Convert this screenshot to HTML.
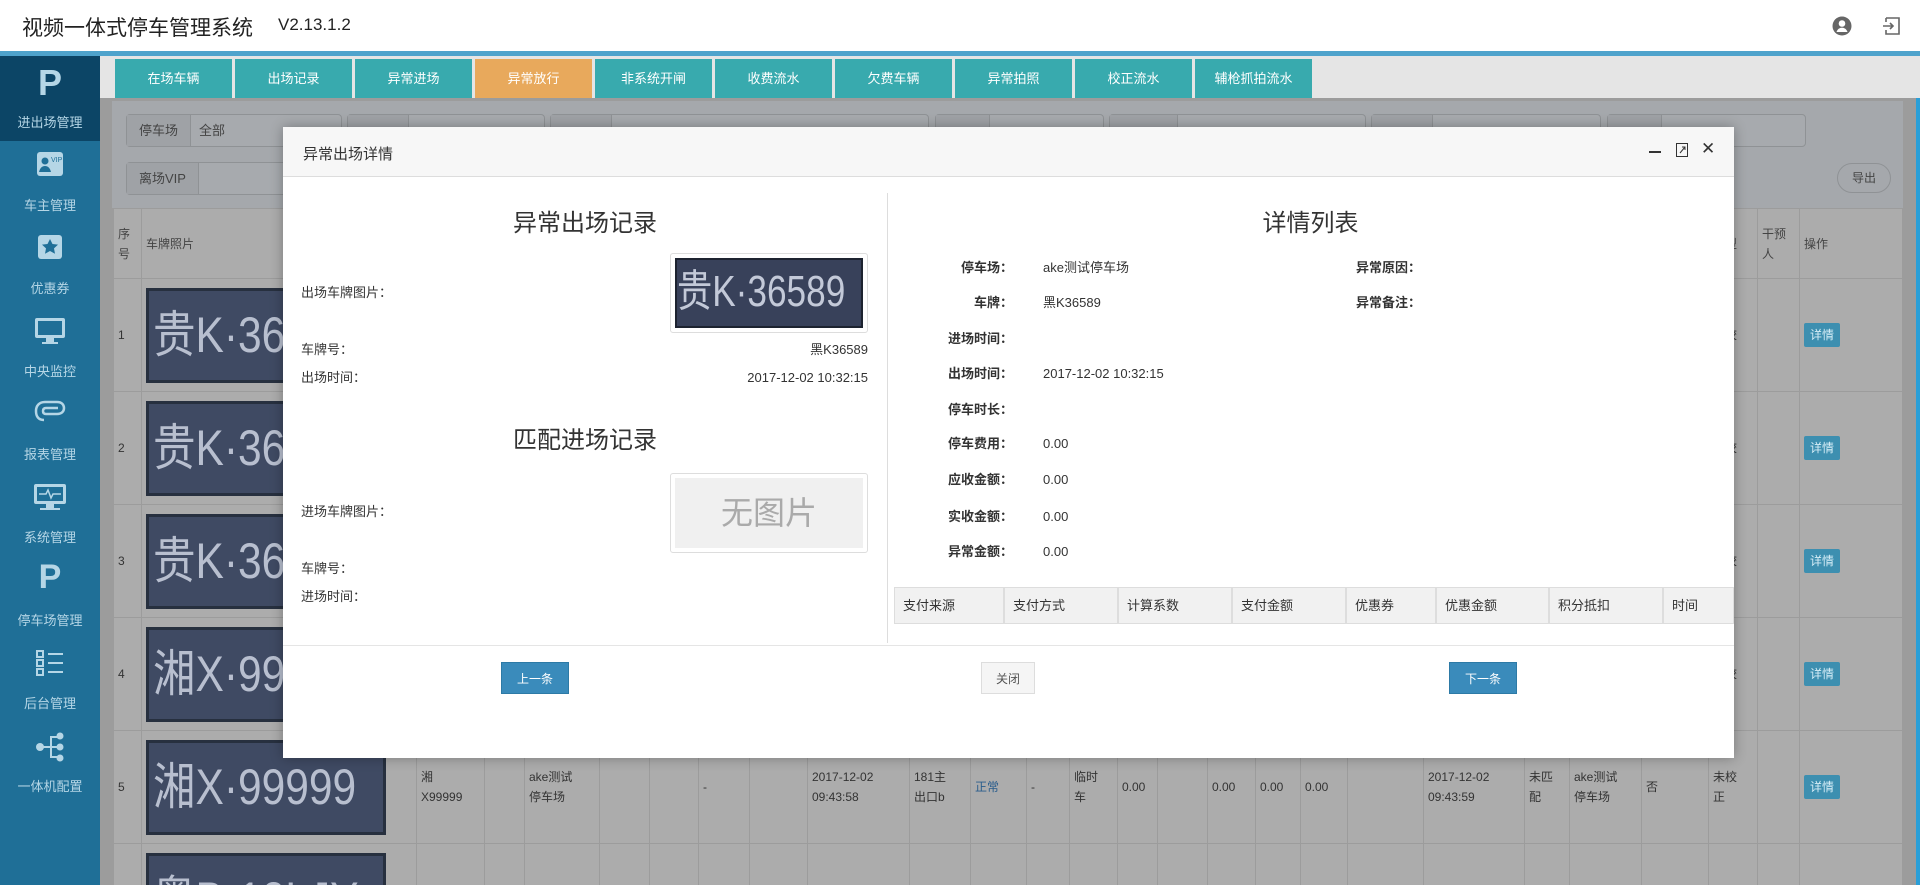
<!DOCTYPE html>
<html style="overflow:hidden"><head><meta charset="utf-8"><style>
*{box-sizing:border-box;margin:0;padding:0}
html,body{width:1920px;height:885px;overflow:hidden}
body{position:relative;background:#9a9a9a;font-family:"Liberation Sans","Noto Sans CJK SC",sans-serif;font-size:13px;color:#333}
#wrap{position:absolute;left:0;top:0;width:1920px;height:885px;overflow:hidden}
.abs{position:absolute}
#top{left:0;top:0;width:1920px;height:51px;background:#fff}
#top .t{left:22px;top:12px;font-size:21px;color:#222}
#top .v{left:278px;top:15px;font-size:17px;color:#222}
#bl{left:0;top:51px;width:1920px;height:5px;background:#4fa3cc}
#side{left:0;top:56px;width:100px;height:829px;background:#1f6f97;z-index:3}
.si{position:absolute;left:0;width:100px;height:83px;text-align:center;color:#b5d6e6;font-size:13px}
.si .lab{position:absolute;left:0;width:100px;bottom:10px}
.si .ic{position:absolute;left:50%;transform:translateX(-50%);top:10px}
#tabs{left:100px;top:56px;width:1820px;height:42px;background:#e5e5e5}
.tab{position:absolute;top:3px;height:39px;width:117px;background:#38aaae;color:#fff;text-align:center;line-height:39px;font-size:13px}
#cont{left:100px;top:98px;width:1820px;height:787px;background:#9c9c9c}
.fb{position:absolute;border:1px solid #8f9295;border-radius:4px;background:#a7aaae;height:33px;line-height:31px;color:#444}
.fb span{display:inline-block;height:31px;line-height:31px;padding:0 12px;border-right:1px solid #8f9295;background:#9fa2a6;color:#444;margin-right:8px}
#tw{position:absolute;left:113px;top:208px;width:1790px;height:677px;overflow:hidden}
table{border-collapse:collapse;table-layout:fixed;background:#acacac}
td{border:1px solid #9c9c9c;height:113px;vertical-align:middle;padding:0 4px;font-size:12px;color:#333;line-height:20px;overflow:hidden}
tr.h td{height:70px;font-size:12px;color:#444}
.plate{width:240px;height:95px;background:#3f4a63;border:3px solid #27303f;color:#b8bfcf;overflow:hidden;white-space:nowrap;padding-left:4px}
.plate span{display:inline-block;font-size:50px;line-height:88px;transform:scaleX(.85);transform-origin:left}
.btnx{display:inline-block;background:#3d8fb0;color:#d7eef7;font-size:12px;padding:2px 6px;border-radius:2px}
#modal{left:283px;top:127px;width:1451px;height:631px;background:#fff;box-shadow:0 0 12px rgba(0,0,0,.3);z-index:5}
#mh{left:0;top:0;width:1451px;height:50px;background:#f7f7f7;border-bottom:1px solid #ddd}
.lbl{position:absolute;font-size:13px;color:#333;line-height:16px}
.rl{position:absolute;width:120px;text-align:right;font-weight:bold;font-size:13px;color:#333;line-height:16px}
.rv{position:absolute;font-size:13px;color:#333;line-height:16px}
.ph{position:absolute;top:460px;height:37px;border:1px solid #ddd;background:#f1f1f1;font-size:13px;color:#333;line-height:36px;padding-left:8px}
.mb{position:absolute;top:535px;height:32px;line-height:32px;text-align:center;font-size:12px}
</style></head><body><div id="wrap">
<div id="top" class="abs"><div class="abs t">视频一体式停车管理系统</div><div class="abs v">V2.13.1.2</div>
<svg class="abs" style="left:1832px;top:16px" width="20" height="20" viewBox="0 0 20 20"><circle cx="10" cy="10" r="9.5" fill="#666"/><circle cx="10" cy="7.5" r="3.3" fill="#fff"/><path d="M4.5 16c1-3 3-4.3 5.5-4.3s4.5 1.3 5.5 4.3" fill="#fff"/></svg>
<svg class="abs" style="left:1882px;top:16px" width="20" height="20" viewBox="0 0 20 20" fill="none" stroke="#666" stroke-width="1.6"><path d="M4 2h13v16H4v-4M4 6V2"/><path d="M1 10h10M8 7l3 3-3 3"/></svg>
</div>
<div id="bl" class="abs"></div>
<div id="side" class="abs">
<div class="si" style="top:0;height:85px;background:#0c4566"><div class="ic" style="top:6px;font-size:36px;font-weight:bold;color:#b5d6e6">P</div><div class="lab">进出场管理</div></div>
<div class="si" style="top:85px"><svg class="ic" width="28" height="26" viewBox="0 0 28 26"><rect x="1" y="1" width="26" height="24" rx="3" fill="#b5d6e6"/><circle cx="9" cy="10" r="3.5" fill="#1f6f97"/><path d="M3 21c1-4 3-6 6-6s5 2 6 6z" fill="#1f6f97"/><text x="15" y="11" font-size="7" fill="#1f6f97" font-family="Liberation Sans">VIP</text></svg><div class="lab">车主管理</div></div>
<div class="si" style="top:168px"><svg class="ic" width="26" height="26" viewBox="0 0 26 26"><rect x="1" y="1" width="24" height="24" rx="3" fill="#b5d6e6"/><path d="M13 5l2.5 5 5.5.6-4 3.8 1 5.4L13 17l-5 2.8 1-5.4-4-3.8 5.5-.6z" fill="#1f6f97"/></svg><div class="lab">优惠券</div></div>
<div class="si" style="top:251px"><svg class="ic" width="32" height="28" viewBox="0 0 32 28"><rect x="1" y="1" width="30" height="20" rx="2" fill="#b5d6e6"/><rect x="4" y="4" width="24" height="14" fill="#1f6f97"/><rect x="12" y="21" width="8" height="4" fill="#b5d6e6"/><rect x="8" y="25" width="16" height="2" fill="#b5d6e6"/></svg><div class="lab">中央监控</div></div>
<div class="si" style="top:334px"><svg class="ic" width="32" height="22" viewBox="0 0 32 22" fill="none" stroke="#b5d6e6" stroke-width="2.5"><path d="M10 20C4 20 2 16 2 11S5 2 11 2h12c5 0 7 3 7 6s-2 6-7 6H12c-2 0-3-1-3-3s1-3 3-3h12"/></svg><div class="lab">报表管理</div></div>
<div class="si" style="top:417px"><svg class="ic" width="34" height="28" viewBox="0 0 34 28"><rect x="1" y="1" width="32" height="20" rx="2" fill="#b5d6e6"/><rect x="4" y="4" width="26" height="14" fill="#1f6f97"/><path d="M6 11h7l2-4 3 8 2-4h8" fill="none" stroke="#b5d6e6" stroke-width="1.5"/><rect x="13" y="21" width="8" height="4" fill="#b5d6e6"/><rect x="7" y="25" width="20" height="2" fill="#b5d6e6"/></svg><div class="lab">系统管理</div></div>
<div class="si" style="top:500px"><div class="ic" style="top:2px;font-size:34px;font-weight:bold;color:#b5d6e6">P</div><div class="lab">停车场管理</div></div>
<div class="si" style="top:583px"><svg class="ic" width="30" height="30" viewBox="0 0 30 30" fill="none" stroke="#b5d6e6" stroke-width="2"><rect x="2" y="2" width="6" height="6"/><rect x="2" y="11" width="6" height="6"/><rect x="2" y="20" width="6" height="6"/><path d="M13 5h15M13 14h15M13 23h15"/></svg><div class="lab">后台管理</div></div>
<div class="si" style="top:666px"><svg class="ic" width="30" height="30" viewBox="0 0 30 30" fill="#b5d6e6"><circle cx="5" cy="15" r="4"/><circle cx="25" cy="4" r="3.5"/><circle cx="25" cy="15" r="3.5"/><circle cx="25" cy="26" r="3.5"/><path d="M5 14h10V4h10v2H17v8h8v2h-8v8h8v2H15V16H5z"/></svg><div class="lab">一体机配置</div></div>
</div>
<div id="tabs" class="abs">
<div class="tab" style="left:15px">在场车辆</div><div class="tab" style="left:135px">出场记录</div><div class="tab" style="left:255px">异常进场</div><div class="tab" style="left:375px;background:#e8a95c">异常放行</div><div class="tab" style="left:495px">非系统开闸</div><div class="tab" style="left:615px">收费流水</div><div class="tab" style="left:735px">欠费车辆</div><div class="tab" style="left:855px">异常拍照</div><div class="tab" style="left:975px">校正流水</div><div class="tab" style="left:1095px">辅枪抓拍流水</div>
</div>
<div id="cont" class="abs">
<div class="abs" style="left:12px;top:3px;width:1791px;height:107px;background:#a5a8ac"></div>
<div class="fb" style="left:26px;top:16px;width:216px"><span>停车场</span>全部</div>
<div class="fb" style="left:247px;top:16px;width:198px"><span>&nbsp;&nbsp;&nbsp;&nbsp;&nbsp;&nbsp;&nbsp;&nbsp;&nbsp;&nbsp;</span></div>
<div class="fb" style="left:450px;top:16px;width:379px"><span>&nbsp;&nbsp;&nbsp;&nbsp;&nbsp;&nbsp;&nbsp;&nbsp;&nbsp;&nbsp;</span></div>
<div class="fb" style="left:835px;top:16px;width:169px"><span>&nbsp;&nbsp;&nbsp;&nbsp;&nbsp;&nbsp;&nbsp;&nbsp;</span></div>
<div class="fb" style="left:1009px;top:16px;width:257px"><span>&nbsp;&nbsp;&nbsp;&nbsp;&nbsp;&nbsp;&nbsp;&nbsp;&nbsp;&nbsp;&nbsp;&nbsp;</span></div>
<div class="fb" style="left:1271px;top:16px;width:230px"><span>&nbsp;&nbsp;&nbsp;&nbsp;&nbsp;&nbsp;&nbsp;&nbsp;&nbsp;&nbsp;</span></div>
<div class="fb" style="left:1507px;top:16px;width:199px"><span>&nbsp;&nbsp;&nbsp;&nbsp;&nbsp;&nbsp;&nbsp;&nbsp;</span></div>
<div class="fb" style="left:26px;top:64px;width:300px"><span>离场VIP</span></div>
<div class="abs" style="left:1737px;top:65px;width:54px;height:30px;border:1px solid #8f9295;border-radius:15px;text-align:center;line-height:28px;font-size:12px;color:#444">导出</div>
<div class="abs" style="left:1816px;top:0;width:4px;height:787px;background:#2a9fd8"></div>
</div>
<div id="tw"><table>
<colgroup><col style="width:28px"><col style="width:275px"><col style="width:68px"><col style="width:40px"><col style="width:75px"><col style="width:50px"><col style="width:49px"><col style="width:51px"><col style="width:58px"><col style="width:102px"><col style="width:61px"><col style="width:56px"><col style="width:43px"><col style="width:48px"><col style="width:40px"><col style="width:50px"><col style="width:48px"><col style="width:45px"><col style="width:47px"><col style="width:76px"><col style="width:101px"><col style="width:45px"><col style="width:72px"><col style="width:67px"><col style="width:49px"><col style="width:42px"><col style="width:103px"></colgroup>
<tr class="h"><td>序号</td><td>车牌照片</td><td></td><td></td><td></td><td></td><td></td><td></td><td></td><td></td><td></td><td></td><td></td><td></td><td></td><td></td><td></td><td></td><td></td><td></td><td></td><td></td><td></td><td></td><td>项型</td><td>干预人</td><td>操作</td></tr>
<tr><td>1</td><td><div class="plate"><span>贵K·36589</span></div></td><td></td><td></td><td></td><td></td><td></td><td></td><td></td><td></td><td></td><td></td><td></td><td></td><td></td><td></td><td></td><td></td><td></td><td></td><td></td><td></td><td></td><td></td><td>未校</td><td></td><td><span class="btnx">详情</span></td></tr>
<tr><td>2</td><td><div class="plate"><span>贵K·36589</span></div></td><td></td><td></td><td></td><td></td><td></td><td></td><td></td><td></td><td></td><td></td><td></td><td></td><td></td><td></td><td></td><td></td><td></td><td></td><td></td><td></td><td></td><td></td><td>未校</td><td></td><td><span class="btnx">详情</span></td></tr>
<tr><td>3</td><td><div class="plate"><span>贵K·36589</span></div></td><td></td><td></td><td></td><td></td><td></td><td></td><td></td><td></td><td></td><td></td><td></td><td></td><td></td><td></td><td></td><td></td><td></td><td></td><td></td><td></td><td></td><td></td><td>未校</td><td></td><td><span class="btnx">详情</span></td></tr>
<tr><td>4</td><td><div class="plate"><span>湘X·99999</span></div></td><td></td><td></td><td></td><td></td><td></td><td></td><td></td><td></td><td></td><td></td><td></td><td></td><td></td><td></td><td></td><td></td><td></td><td></td><td></td><td></td><td></td><td></td><td>未校</td><td></td><td><span class="btnx">详情</span></td></tr>
<tr><td>5</td><td><div class="plate"><span>湘X·99999</span></div></td><td>湘<br>X99999</td><td></td><td>ake测试<br>停车场</td><td></td><td></td><td>-</td><td></td><td>2017-12-02<br>09:43:58</td><td>181主<br>出口b</td><td style="color:#2a5d8c">正常</td><td>-</td><td>临时<br>车</td><td>0.00</td><td></td><td>0.00</td><td>0.00</td><td>0.00</td><td></td><td>2017-12-02<br>09:43:59</td><td>未匹<br>配</td><td>ake测试<br>停车场</td><td>否</td><td>未校<br>正</td><td></td><td><span class="btnx">详情</span></td></tr>
<tr><td></td><td><div class="plate"><span>粤B·12LJY</span></div></td><td></td><td></td><td></td><td></td><td></td><td></td><td></td><td></td><td></td><td></td><td></td><td></td><td></td><td></td><td></td><td></td><td></td><td></td><td></td><td></td><td></td><td></td><td></td><td>lgc</td><td></td></tr>
</table></div>
<div id="modal" class="abs">
<div id="mh" class="abs"><div class="abs" style="left:20px;top:16px;font-size:15px;color:#333">异常出场详情</div>
<div class="abs" style="left:1366px;top:24px;width:12px;height:2px;background:#333"></div>
<svg class="abs" style="left:1393px;top:16px" width="12" height="14" viewBox="0 0 12 14" fill="none" stroke="#333"><rect x="0.5" y="0.5" width="11" height="13"/><path d="M4 10l5-6M6 4h3v3"/></svg>
<div class="abs" style="left:1418px;top:12px;font-size:17px;color:#333">✕</div>
</div>
<div class="abs" style="left:604px;top:66px;width:1px;height:450px;background:#ddd"></div>
<div class="abs" style="left:0;top:76px;width:604px;text-align:center;font-size:24px;color:#333">异常出场记录</div>
<div class="lbl" style="left:18px;top:158px">出场车牌图片：</div>
<div class="abs" style="left:387px;top:126px;width:198px;height:80px;border:1px solid #ddd;border-radius:3px;padding:4px"><div style="width:188px;height:70px;background:#38415a;border:2px solid #1d2330;color:#c3c9d8;overflow:hidden;white-space:nowrap"><span style="display:inline-block;font-size:44px;line-height:64px;transform:scaleX(.8);transform-origin:left">贵K·36589</span></div></div>
<div class="lbl" style="left:18px;top:215px">车牌号：</div><div class="lbl" style="left:385px;width:200px;text-align:right;top:215px">黑K36589</div>
<div class="lbl" style="left:18px;top:243px">出场时间：</div><div class="lbl" style="left:385px;width:200px;text-align:right;top:243px">2017-12-02 10:32:15</div>
<div class="abs" style="left:0;top:293px;width:604px;text-align:center;font-size:24px;color:#333">匹配进场记录</div>
<div class="abs" style="left:387px;top:346px;width:198px;height:80px;border:1px solid #ddd;border-radius:3px;padding:4px"><div style="width:188px;height:70px;background:#f0f0f0;color:#aaa;font-size:32px;line-height:70px;text-align:center">无图片</div></div>
<div class="lbl" style="left:18px;top:377px">进场车牌图片：</div>
<div class="lbl" style="left:18px;top:434px">车牌号：</div>
<div class="lbl" style="left:18px;top:462px">进场时间：</div>
<div class="abs" style="left:604px;top:76px;width:847px;text-align:center;font-size:24px;color:#333">详情列表</div>
<div class="rl" style="left:610px;top:133px">停车场：</div><div class="rv" style="left:760px;top:133px">ake测试停车场</div>
<div class="rl" style="left:610px;top:168px">车牌：</div><div class="rv" style="left:760px;top:168px">黑K36589</div>
<div class="rl" style="left:610px;top:204px">进场时间：</div>
<div class="rl" style="left:610px;top:239px">出场时间：</div><div class="rv" style="left:760px;top:239px">2017-12-02 10:32:15</div>
<div class="rl" style="left:610px;top:275px">停车时长：</div>
<div class="rl" style="left:610px;top:309px">停车费用：</div><div class="rv" style="left:760px;top:309px">0.00</div>
<div class="rl" style="left:610px;top:345px">应收金额：</div><div class="rv" style="left:760px;top:345px">0.00</div>
<div class="rl" style="left:610px;top:382px">实收金额：</div><div class="rv" style="left:760px;top:382px">0.00</div>
<div class="rl" style="left:610px;top:417px">异常金额：</div><div class="rv" style="left:760px;top:417px">0.00</div>
<div class="rl" style="left:1073px;top:133px;text-align:left">异常原因：</div>
<div class="rl" style="left:1073px;top:168px;text-align:left">异常备注：</div>
<div class="ph" style="left:611px;width:110px">支付来源</div><div class="ph" style="left:721px;width:114px">支付方式</div><div class="ph" style="left:835px;width:114px">计算系数</div><div class="ph" style="left:949px;width:114px">支付金额</div><div class="ph" style="left:1063px;width:90px">优惠券</div><div class="ph" style="left:1153px;width:113px">优惠金额</div><div class="ph" style="left:1266px;width:114px">积分抵扣</div><div class="ph" style="left:1380px;width:71px">时间</div>
<div class="abs" style="left:0;top:518px;width:1451px;height:1px;background:#e5e5e5"></div>
<div class="mb" style="left:218px;width:68px;background:#3a8bbb;color:#fff;border:1px solid #2d7aa6">上一条</div>
<div class="mb" style="left:698px;width:54px;background:#f5f5f5;color:#555;border:1px solid #ddd">关闭</div>
<div class="mb" style="left:1166px;width:68px;background:#3a8bbb;color:#fff;border:1px solid #2d7aa6">下一条</div>
</div>
</div></body></html>
